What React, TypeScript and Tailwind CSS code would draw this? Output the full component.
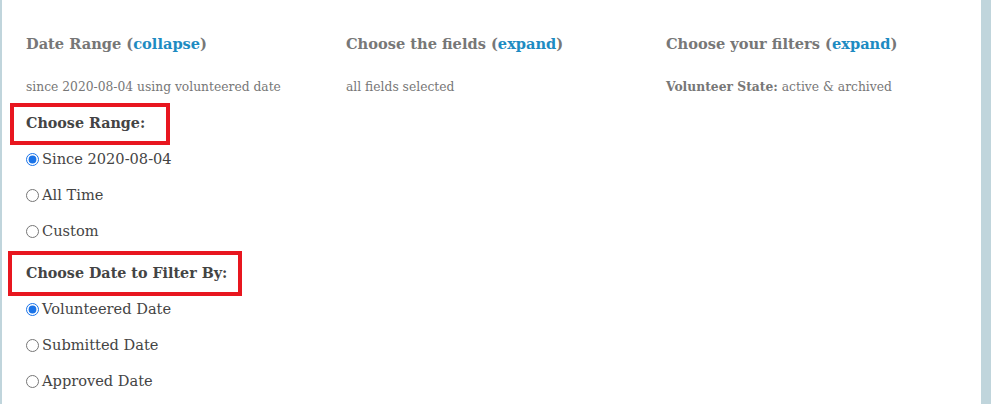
import React from "react";

const serif = { fontFamily: '"DejaVu Serif", Georgia, serif' };

function Radio({ label, checked }: { label: string; checked?: boolean }) {
  return (
    <label className="h-[36px] flex items-center text-[14.6px] text-[#444]">
      <input
        type="radio"
        defaultChecked={checked}
        className="w-[13px] h-[13px] mr-[3px] accent-[#1a73e8]"
      />
      {label}
    </label>
  );
}

export default function App() {
  return (
    <div className="w-[991px] h-[404px] bg-white flex overflow-hidden" style={serif}>
      {/* left edge */}
      <div className="w-[2px] bg-[#c0d5dc]" />

      <div className="flex-1 flex pl-[24px] pt-[34px]">
        {/* Date Range */}
        <div className="w-[320px] flex flex-col">
          <h2 className="text-[14.6px] font-bold text-[#777] leading-[20px]">
            Date Range (<a className="text-[#1d8bc2]">collapse</a>)
          </h2>
          <p className="text-[12.3px] text-[#777] mt-[24px] leading-[18px]">
            since 2020-08-04 using volunteered date
          </p>

          <div className="mt-[7px] -ml-[16px] w-[160px] h-[42px] border-[4px] border-[#e8161f] pl-[12px] flex items-center -mb-[4px]">
            <span className="text-[14.3px] font-bold text-[#444]">Choose Range:</span>
          </div>
          <Radio label="Since 2020-08-04" checked />
          <Radio label="All Time" />
          <Radio label="Custom" />

          <div className="mt-[2px] -ml-[18px] w-[234px] h-[45px] border-[4px] border-[#e8161f] pl-[14px] flex items-center -mb-[5px]">
            <span className="text-[14.3px] font-bold text-[#444]">Choose Date to Filter By:</span>
          </div>
          <Radio label="Volunteered Date" checked />
          <Radio label="Submitted Date" />
          <Radio label="Approved Date" />
        </div>

        {/* Fields */}
        <div className="w-[320px] flex flex-col">
          <h2 className="text-[14.6px] font-bold text-[#777] leading-[20px]">
            Choose the fields (<a className="text-[#1d8bc2]">expand</a>)
          </h2>
          <p className="text-[12.3px] text-[#777] mt-[24px] leading-[18px]">all fields selected</p>
        </div>

        {/* Filters */}
        <div className="flex-1 flex flex-col">
          <h2 className="text-[14.6px] font-bold text-[#777] leading-[20px]">
            Choose your filters (<a className="text-[#1d8bc2]">expand</a>)
          </h2>
          <p className="text-[12.3px] text-[#777] mt-[24px] leading-[18px]">
            <span className="font-bold">Volunteer State:</span> active &amp; archived
          </p>
        </div>
      </div>

      {/* right scroll strip */}
      <div className="w-[10px] bg-[#c0d5dc]" />
    </div>
  );
}
